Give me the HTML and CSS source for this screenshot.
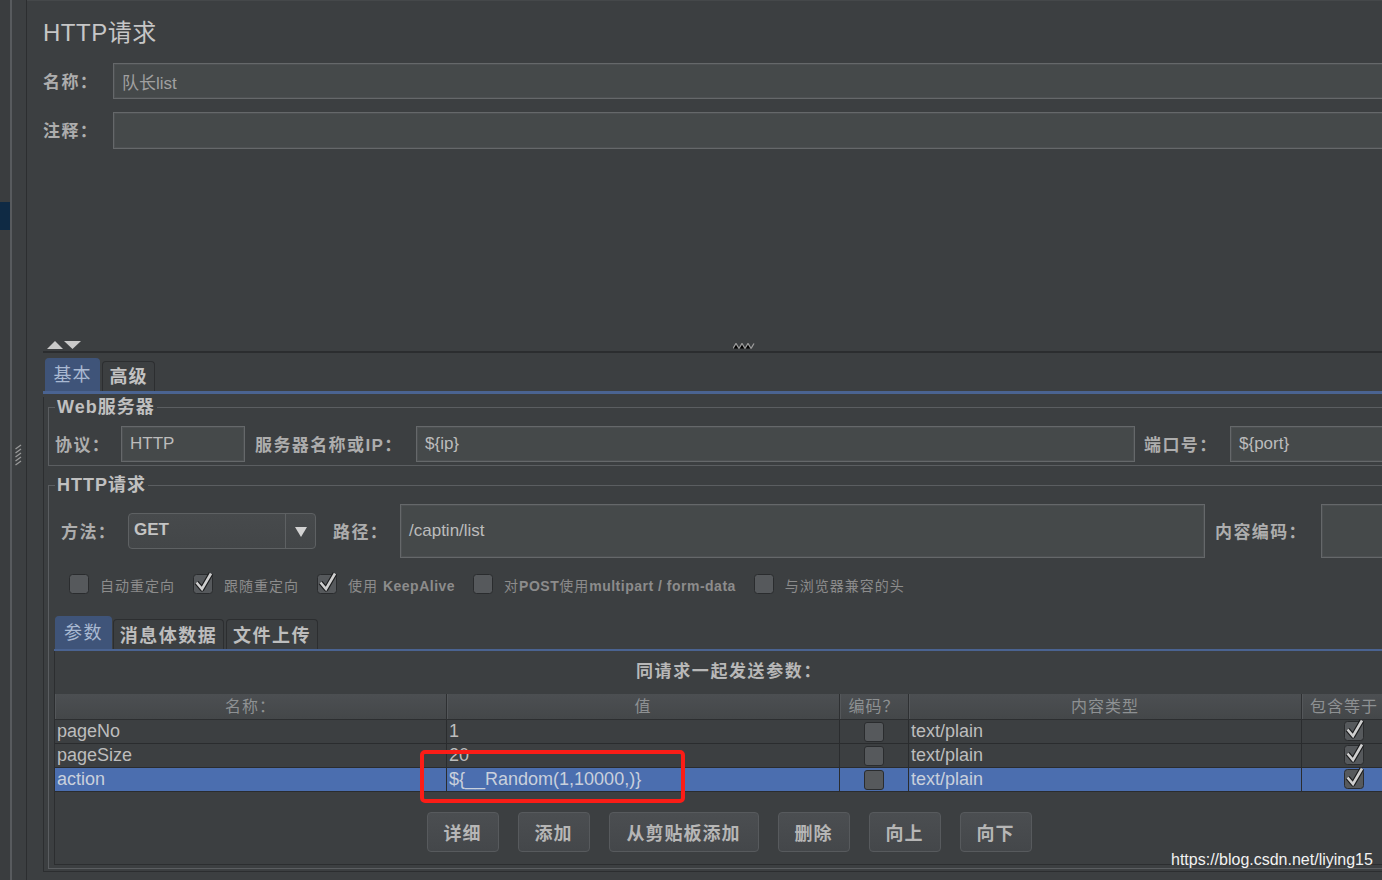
FILE: index.html
```html
<!DOCTYPE html>
<html lang="zh">
<head>
<meta charset="utf-8">
<title>HTTP请求</title>
<link rel="stylesheet" href="styles.css">
</head>
<body>
<div class="app">
  <div class="rail"><div class="rail-sel"></div></div>
  <div class="rail-line"></div>
  <div class="splitter">
    <svg class="vgrip" width="7" height="22" viewBox="0 0 7 22"><g stroke="#9a9a9a" stroke-width="1.2"><path d="M0.5 5 L6 1"/><path d="M0.5 9 L6 5"/><path d="M0.5 13 L6 9"/><path d="M0.5 17 L6 13"/><path d="M0.5 21 L6 17"/></g></svg>
  </div>
  <div class="split-line"></div>
  <main class="main">
    <h1 class="title">HTTP请求</h1>
    <div class="frow name-row"><span class="lbl lbl-top">名称：</span><div class="input grow dim">队长list</div></div>
    <div class="frow comment-row"><span class="lbl lbl-top">注释：</span><div class="input grow"></div></div>
    <div class="spacer"></div>
    <div class="divider-bar">
      <svg class="arrows" width="34" height="8" viewBox="0 0 34 8"><polygon points="0,8 8,0 16,8" fill="#c9c9c9"/><polygon points="17,0 34,0 25.5,8" fill="#c9c9c9"/></svg>
      <svg class="hgrip" width="22" height="6" viewBox="0 0 22 6"><g stroke="#9c9c9c" stroke-width="1.3"><path d="M0 5.5 L3 0.5 L6 5.5"/><path d="M6 5.5 L9 0.5 L12 5.5"/><path d="M12 5.5 L15 0.5 L18 5.5"/><path d="M18 5.5 L21 0.5"/></g></svg>
    </div>
    <div class="divider-line"></div>
    <section class="tabpane">
      <div class="tabs">
        <div class="tab sel">基本</div>
        <div class="tab">高级</div>
      </div>
      <div class="tab-body">
        <fieldset class="group web">
          <legend>Web服务器</legend>
          <div class="frow web-row">
            <span class="lbl w-proto">协议：</span>
            <div class="input f-proto">HTTP</div>
            <span class="lbl w-host">服务器名称或IP：</span>
            <div class="input f-host">${ip}</div>
            <span class="lbl w-port">端口号：</span>
            <div class="input grow">${port}</div>
          </div>
        </fieldset>
        <fieldset class="group http">
          <legend>HTTP请求</legend>
          <div class="frow method-row">
            <span class="lbl w-method">方法：</span>
            <div class="combo">
              <span class="combo-val">GET</span>
              <span class="combo-btn"><svg width="12" height="10" viewBox="0 0 12 10"><polygon points="0,0 12,0 6,10" fill="#d2d2d2"/></svg></span>
            </div>
            <span class="lbl w-path">路径：</span>
            <div class="input f-path">/captin/list</div>
            <span class="lbl w-enc">内容编码：</span>
            <div class="input grow"></div>
          </div>
          <div class="checks">
            <div class="chk">
              <svg class="cb" width="21" height="22" viewBox="0 0 21 22"><rect x="0.5" y="2.5" width="19" height="19" rx="3" fill="#56595c" stroke="#2a2c2e"/></svg>
              <span class="chk-l">自动重定向</span>
            </div>
            <div class="chk">
              <svg class="cb" width="21" height="22" viewBox="0 0 21 22"><rect x="0.5" y="2.5" width="19" height="19" rx="3" fill="#56595c" stroke="#2a2c2e"/><path d="M3.5 10.5 L9 17 L18 1.5" fill="none" stroke="#1c1d1e" stroke-width="5" stroke-linejoin="round"/><path d="M3.5 10.5 L9 17 L18 1.5" fill="none" stroke="#cfcfcf" stroke-width="2.6"/></svg>
              <span class="chk-l">跟随重定向</span>
            </div>
            <div class="chk">
              <svg class="cb" width="21" height="22" viewBox="0 0 21 22"><rect x="0.5" y="2.5" width="19" height="19" rx="3" fill="#56595c" stroke="#2a2c2e"/><path d="M3.5 10.5 L9 17 L18 1.5" fill="none" stroke="#1c1d1e" stroke-width="5" stroke-linejoin="round"/><path d="M3.5 10.5 L9 17 L18 1.5" fill="none" stroke="#cfcfcf" stroke-width="2.6"/></svg>
              <span class="chk-l">使用 <b>KeepAlive</b></span>
            </div>
            <div class="chk">
              <svg class="cb" width="21" height="22" viewBox="0 0 21 22"><rect x="0.5" y="2.5" width="19" height="19" rx="3" fill="#56595c" stroke="#2a2c2e"/></svg>
              <span class="chk-l">对<b>POST</b>使用<b>multipart / form-data</b></span>
            </div>
            <div class="chk">
              <svg class="cb" width="21" height="22" viewBox="0 0 21 22"><rect x="0.5" y="2.5" width="19" height="19" rx="3" fill="#56595c" stroke="#2a2c2e"/></svg>
              <span class="chk-l">与浏览器兼容的头</span>
            </div>
          </div>
          <div class="subpane">
            <div class="subtabs">
              <div class="stab sel t1">参数</div>
              <div class="stab t2">消息体数据</div>
              <div class="stab t3">文件上传</div>
            </div>
            <div class="subbody">
              <div class="caption">同请求一起发送参数：</div>
              <div class="tbl">
                <div class="th">名称：</div>
                <div class="th">值</div>
                <div class="th">编码？</div>
                <div class="th">内容类型</div>
                <div class="th th-last">包含等于</div>

                <div class="td">pageNo</div>
                <div class="td">1</div>
                <div class="td tc"><span class="tcb"></span></div>
                <div class="td">text/plain</div>
                <div class="td tc last"><svg class="cb" width="21" height="22" viewBox="0 0 21 22"><rect x="0.5" y="2.5" width="19" height="19" rx="3" fill="#56595c" stroke="#2a2c2e"/><path d="M3.5 10.5 L9 17 L18 1.5" fill="none" stroke="#1c1d1e" stroke-width="5" stroke-linejoin="round"/><path d="M3.5 10.5 L9 17 L18 1.5" fill="none" stroke="#cfcfcf" stroke-width="2.6"/></svg></div>

                <div class="td">pageSize</div>
                <div class="td">20</div>
                <div class="td tc"><span class="tcb"></span></div>
                <div class="td">text/plain</div>
                <div class="td tc last"><svg class="cb" width="21" height="22" viewBox="0 0 21 22"><rect x="0.5" y="2.5" width="19" height="19" rx="3" fill="#56595c" stroke="#2a2c2e"/><path d="M3.5 10.5 L9 17 L18 1.5" fill="none" stroke="#1c1d1e" stroke-width="5" stroke-linejoin="round"/><path d="M3.5 10.5 L9 17 L18 1.5" fill="none" stroke="#cfcfcf" stroke-width="2.6"/></svg></div>

                <div class="td sel">action</div>
                <div class="td sel">${__Random(1,10000,)}</div>
                <div class="td sel tc"><span class="tcb"></span></div>
                <div class="td sel">text/plain</div>
                <div class="td sel tc last"><svg class="cb" width="21" height="22" viewBox="0 0 21 22"><rect x="0.5" y="2.5" width="19" height="19" rx="3" fill="#56595c" stroke="#2a2c2e"/><path d="M3.5 10.5 L9 17 L18 1.5" fill="none" stroke="#1c1d1e" stroke-width="5" stroke-linejoin="round"/><path d="M3.5 10.5 L9 17 L18 1.5" fill="none" stroke="#cfcfcf" stroke-width="2.6"/></svg></div>
              </div>
              <div class="buttons">
                <button class="btn">详细</button>
                <button class="btn">添加</button>
                <button class="btn wide">从剪贴板添加</button>
                <button class="btn">删除</button>
                <button class="btn">向上</button>
                <button class="btn">向下</button>
              </div>
            </div>
          </div>
        </fieldset>
      </div>
    </section>
  </main>
</div>
<div class="annot"></div>
<div class="watermark">https://blog.csdn.net/liying15</div>
</body>
</html>
```

FILE: styles.css
```css
* { box-sizing: border-box; }

html, body {
  margin: 0;
  padding: 0;
}

body {
  width: 1382px;
  height: 880px;
  overflow: hidden;
  background: #3c3f41;
  color: #bbbbbb;
  font-family: "Liberation Sans", "Noto Sans CJK SC", sans-serif;
  position: relative;
}

.app {
  display: flex;
  height: 880px;
}

.rail {
  flex: 0 0 10px;
  background: #3a3d3f;
}

.rail-sel {
  margin-top: 202px;
  height: 28px;
  background: #0f2a44;
}

.rail-line {
  flex: 0 0 2px;
  background: #585b5e;
}

.splitter {
  flex: 0 0 14px;
  display: flex;
  align-items: flex-start;
  justify-content: center;
  padding-top: 444px;
  padding-right: 1px;
}

.split-line {
  flex: 0 0 1px;
  background: #2c2e30;
}

.main {
  flex: 0 0 1376px;
  width: 1376px;
  padding-left: 16px;
  display: flex;
  flex-direction: column;
  border-top: 1px solid #45484a;
}

.title {
  margin: 0;
  height: 62px;
  padding-top: 17px;
  font-size: 24px;
  line-height: 30px;
  font-weight: normal;
  color: #c6c6c6;
  letter-spacing: 0.5px;
}

.frow {
  display: flex;
  align-items: center;
}

.name-row { height: 36px; margin-bottom: 13px; }
.comment-row { height: 37px; }

.lbl {
  flex: none;
  font-size: 17px;
  font-weight: bold;
  color: #adadad;
  white-space: nowrap;
  letter-spacing: 1.4px;
  margin-top: -2px;
}

.lbl-top { width: 70px; }

.input {
  height: 100%;
  background: #45494a;
  border: 1px solid #65686a;
  box-shadow: inset 0 0 0 1px #4d5052;
  font-size: 17px;
  color: #bcbcbc;
  padding-left: 8px;
  display: flex;
  align-items: center;
  white-space: nowrap;
  font-family: "Liberation Sans", "Noto Sans CJK SC", sans-serif;
}

.input.dim { color: #a0a0a0; }

.grow { flex: 1; min-width: 0; }

.spacer { height: 189px; flex: none; }

.divider-bar {
  height: 13px;
  display: flex;
  align-items: flex-start;
  padding-top: 3px;
}

.arrows { margin-left: 4px; display: block; }
.hgrip { margin-left: 652px; margin-top: 2px; display: block; }

.divider-line {
  height: 2px;
  background: #2b2d2f;
}

.tabs {
  height: 41px;
  display: flex;
  align-items: flex-end;
  padding-left: 2px;
  border-bottom: 3px solid #4a6391;
}

.tab {
  height: 30px;
  width: 53px;
  margin-left: 2px;
  border: 1px solid #2c2e30;
  border-bottom: none;
  border-radius: 4px 4px 0 0;
  background: #3c3f41;
  font-size: 18px;
  font-weight: bold;
  color: #c2c2c2;
  display: flex;
  align-items: center;
  justify-content: center;
  padding-bottom: 3px;
  letter-spacing: 1px;
}

.tab.sel {
  margin-left: 0;
  width: 55px;
  height: 33px;
  background: #3f5479;
  border-color: #3f5479;
  color: #a9b9d2;
  font-weight: normal;
  padding-bottom: 4px;
}

.tab-body {
  border-left: 1px solid #2c2e30;
  border-bottom: 1px solid #2c2e30;
  padding-left: 4px;
  padding-bottom: 2px;
}

.group {
  margin: 0;
  border: 1px solid #5b5e61;
  border-right: none;
  padding: 0 0 3px 6px;
  min-width: 0;
}

.group legend {
  padding: 0 2px;
  font-size: 18px;
  line-height: 20px;
  font-weight: bold;
  color: #c0c0c0;
  letter-spacing: 1px;
}

.web { margin-top: 3px; }
.web-row { height: 36px; margin-top: 9px; }

.w-proto { width: 66px; }
.f-proto { flex: 0 0 124px; }
.w-host { width: 161px; margin-left: 10px; }
.f-host { flex: 0 0 719px; }
.w-port { width: 86px; margin-left: 9px; }

.http { margin-top: 9px; padding-bottom: 3px; }
.method-row { height: 54px; margin-top: 9px; padding-left: 6px; }

.w-method { width: 67px; }
.combo {
  flex: 0 0 188px;
  height: 36px;
  display: flex;
  border: 1px solid #5e6163;
  border-radius: 4px;
  background: linear-gradient(#474a4c, #434648);
}
.combo-val {
  flex: 1;
  padding-left: 5px;
  font-size: 17px;
  font-weight: bold;
  line-height: 32px;
  color: #c4c4c4;
}
.combo-btn {
  flex: 0 0 30px;
  border-left: 1px solid #5e6163;
  display: flex;
  align-items: center;
  justify-content: center;
  padding-top: 2px;
}
.w-path { width: 67px; margin-left: 17px; }
.f-path { flex: 0 0 805px; }
.w-enc { width: 106px; margin-left: 10px; }

.checks {
  display: flex;
  align-items: center;
  height: 22px;
  margin-top: 14px;
  padding-left: 14px;
}

.chk {
  display: flex;
  align-items: center;
  margin-right: 18px;
}

.cb { display: block; flex: none; }

.chk-l {
  margin-left: 10px;
  font-size: 14px;
  color: #8c8c8c;
  letter-spacing: 1px;
  white-space: nowrap;
  font-family: "Liberation Sans", "Noto Sans CJK SC", sans-serif;
  margin-top: 3px;
}
.chk-l b { font-weight: bold; letter-spacing: 0.5px; }

.subpane {
  margin-left: -1px;
  margin-top: 19px;
}

.subtabs {
  height: 38px;
  display: flex;
  align-items: flex-end;
  padding-left: 1px;
  border-bottom: 2px solid #4a6391;
}

.stab {
  height: 30px;
  border: 1px solid #2c2e30;
  border-bottom: none;
  border-radius: 4px 4px 0 0;
  font-size: 18px;
  font-weight: bold;
  color: #bdbdbd;
  display: flex;
  align-items: center;
  justify-content: center;
  padding-bottom: 1px;
  margin-left: 1px;
  letter-spacing: 1.5px;
}
.stab.sel {
  height: 33px;
  margin-left: 0;
  background: #3f5479;
  border-color: #3f5479;
  color: #a9b9d2;
  font-weight: normal;
  padding-bottom: 5px;
}
.t1 { width: 57px; }
.t2 { width: 111px; }
.t3 { width: 92px; margin-left: 2px; }

.subbody {
  border-left: 1px solid #2c2e30;
  border-bottom: 1px solid #2c2e30;
  padding-top: 10px;
  padding-bottom: 12px;
}

.caption {
  height: 22px;
  line-height: 22px;
  text-align: center;
  font-size: 17px;
  font-weight: bold;
  color: #b8b8b8;
  letter-spacing: 1.6px;
}

.tbl {
  margin-top: 11px;
  display: grid;
  grid-template-columns: 392px 393px 69px 393px 1fr;
}

.th {
  height: 26px;
  background: linear-gradient(#4c4f52, #444749);
  border-right: 1px solid #2e3032;
  border-bottom: 1px solid #2c2e30;
  box-shadow: inset 1px 0 0 #54575a;
  text-align: center;
  font-size: 16px;
  line-height: 25px;
  color: #8e9193;
  white-space: nowrap;
  overflow: hidden;
  letter-spacing: 1px;
}
.th-last { text-align: left; padding-left: 8px; border-right: none; }

.td {
  height: 24px;
  border-right: 1px solid #2a2c2e;
  border-bottom: 1px solid #2a2c2e;
  font-size: 18px;
  line-height: 23px;
  padding-left: 2px;
  color: #bdbdbd;
  white-space: nowrap;
  overflow: hidden;
}
.td.sel { background: #4b6eaf; color: #c9d0dc; }
.td.last { border-right: none; }
.tc {
  display: flex;
  align-items: center;
  justify-content: center;
  padding-left: 0;
  overflow: visible;
}
.tc.last { padding-left: 3px; }
.tc .cb { margin-top: -3px; }
.tcb {
  width: 20px;
  height: 20px;
  border-radius: 3px;
  background: #56595c;
  border: 1px solid #2a2c2e;
}

.buttons {
  display: flex;
  justify-content: center;
  gap: 19px;
  margin-top: 20px;
}

.btn {
  width: 72px;
  height: 40px;
  border: 1px solid #575a5d;
  border-radius: 4px;
  background: linear-gradient(#4b4e51, #44474a);
  color: #b6b6b6;
  font-family: "Liberation Sans", "Noto Sans CJK SC", sans-serif;
  font-size: 18px;
  font-weight: bold;
  letter-spacing: 1px;
  padding: 0;
}
.btn.wide { width: 150px; }

.annot {
  position: absolute;
  left: 420px;
  top: 750px;
  width: 265px;
  height: 53px;
  border: 4px solid #fb1d17;
  border-radius: 5px;
}

.watermark {
  position: absolute;
  left: 1171px;
  top: 850px;
  font-size: 16px;
  line-height: 20px;
  color: #f2f2f2;
  font-family: "Liberation Sans", sans-serif;
}
```
